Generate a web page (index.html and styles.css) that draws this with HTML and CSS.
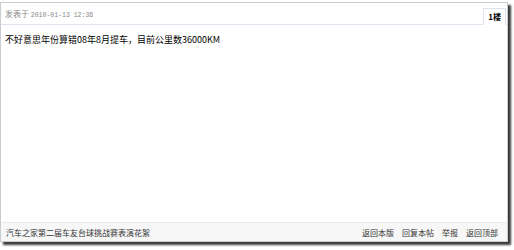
FILE: index.html
```html
<!DOCTYPE html>
<html>
<head>
<meta charset="utf-8">
<link rel="stylesheet" href="styles.css">
</head>
<body>
<div class="shot">
  <div class="post">
    <div class="post-head">
      <span class="meta">发表于 <span class="date">2010-01-13 12:36</span></span>
      <span class="floor">1楼</span>
    </div>
    <div class="post-body">不好意思年份算错08年8月提车，目前公里数36000KM</div>
    <div class="post-foot">
      <span class="sig">汽车之家第二届车友台球挑战赛表演花絮</span>
      <span class="links">
        <a>返回本版</a><a>回复本帖</a><a>举报</a><a>返回顶部</a>
      </span>
    </div>
  </div>
</div>
</body>
</html>
```

FILE: styles.css
```css
html, body {
  margin: 0;
  padding: 0;
  background: #fff;
}
.shot {
  width: 514px;
  height: 250px;
  padding: 2px 0 0 0;
  box-sizing: border-box;
}
.post {
  width: 508px;
  height: 240px;
  box-sizing: border-box;
  border: 1px solid #c9ccd1;
  box-shadow: 3px 3px 2px #3a3a3a;
  display: flex;
  flex-direction: column;
  background: #fff;
  font-family: "Noto Sans CJK SC", sans-serif;
  color: #000;
}
.post-head {
  height: 22px;
  box-sizing: border-box;
  border-bottom: 1px solid #dde4f0;
  display: flex;
  align-items: center;
  justify-content: space-between;
  padding: 0 0 0 4px;
}
.meta {
  font-size: 8px;
  color: #888;
}
.date {
  font-family: "Liberation Mono", monospace;
  font-size: 6.5px;
  color: #888;
}
.floor {
  align-self: flex-end;
  margin-right: 1px;
  margin-bottom: -1px;
  height: 17px;
  box-sizing: border-box;
  padding: 0 4px;
  border: 1px solid #dde4f0;
  border-bottom-color: #fff;
  background: #fff;
  font-size: 8px;
  font-weight: bold;
  line-height: 15px;
}
.post-body {
  flex: 1;
  padding: 8px 4px 0;
  font-size: 9px;
  line-height: 14px;
}
.post-foot {
  height: 19px;
  box-sizing: border-box;
  background: #f7f7f7;
  border-top: 1px solid #ececec;
  display: flex;
  align-items: center;
  justify-content: space-between;
  padding: 0 9px 0 5px;
  font-size: 8px;
  color: #333;
}
.links a {
  margin-left: 8px;
  color: #333;
}
```
